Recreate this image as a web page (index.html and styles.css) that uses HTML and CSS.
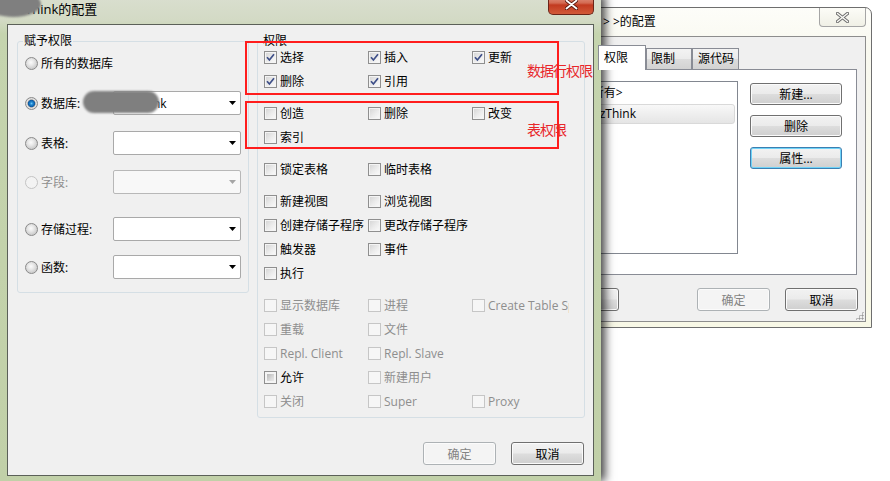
FILE: index.html
```html
<!doctype html>
<html lang="zh-CN">

<head>
    <meta charset="UTF-8">
    <title>权限配置</title>
    <link rel="stylesheet" href="styles.css">
</head>

<body>
    <div class="desktop">

        <!-- 后面的窗口 -->
        <div class="win back">
            <div class="back-title">
                <span class="back-text">&gt; &gt;的配置</span>
                <span class="back-close">
                    <svg width="13" height="11" viewBox="0 0 13 11"><path d="M1.5 1.5 L11.5 9.5 M11.5 1.5 L1.5 9.5" stroke="#6f6f6f" stroke-width="3.4" stroke-linecap="round"/><path d="M1.5 1.5 L11.5 9.5 M11.5 1.5 L1.5 9.5" stroke="#fbfbf6" stroke-width="1.4" stroke-linecap="round"/></svg>
                </span>
            </div>
            <div class="back-client">
                <div class="tabs">
                    <span class="tab active">权限</span>
                    <span class="tab t2">限制</span>
                    <span class="tab t3">源代码</span>
                </div>
                <div class="tab-panel">
                    <ul class="user-list">
                        <li>&lt;所有&gt;</li>
                        <li class="sel">dbzThink</li>
                    </ul>
                    <div class="side-btns">
                        <button class="btn wide">新建...</button>
                        <button class="btn wide">删除</button>
                        <button class="btn wide focus">属性...</button>
                    </div>
                </div>
                <div class="back-foot">
                    <button class="btn">应用</button>
                    <button class="btn push" disabled>确定</button>
                    <button class="btn">取消</button>
                </div>
                <span class="grip"></span>
            </div>
        </div>

        <!-- 前面的窗口 -->
        <div class="win front">
            <div class="front-title">
                <span class="front-text">Think的配置</span>
                <span class="front-close">
                    <svg width="13" height="11" viewBox="0 0 13 11"><path d="M1.5 1.5 L11.5 9.5 M11.5 1.5 L1.5 9.5" stroke="#5a1a10" stroke-width="3.6" stroke-linecap="round"/><path d="M1.5 1.5 L11.5 9.5 M11.5 1.5 L1.5 9.5" stroke="#fff" stroke-width="1.8" stroke-linecap="round"/></svg>
                </span>
            </div>
            <div class="front-client">
                <div class="groups">
                    <fieldset class="group group-grant">
                        <legend>赋予权限</legend>
                        <div class="opt opt-all">
                            <span class="radio"></span><span>所有的数据库</span>
                        </div>
                        <div class="opt">
                            <span class="opt-label"><span class="radio on"></span>数据库:</span>
                            <div class="combo"><span class="combo-text">onethink</span><span class="arrow"></span></div>
                        </div>
                        <div class="opt">
                            <span class="opt-label"><span class="radio"></span>表格:</span>
                            <div class="combo"><span class="combo-text"></span><span class="arrow"></span></div>
                        </div>
                        <div class="opt opt-field off">
                            <span class="opt-label"><span class="radio"></span>字段:</span>
                            <div class="combo"><span class="combo-text"></span><span class="arrow"></span></div>
                        </div>
                        <div class="opt opt-proc">
                            <span class="opt-label"><span class="radio"></span>存储过程:</span>
                            <div class="combo"><span class="combo-text"></span><span class="arrow"></span></div>
                        </div>
                        <div class="opt opt-func">
                            <span class="opt-label"><span class="radio"></span>函数:</span>
                            <div class="combo"><span class="combo-text"></span><span class="arrow"></span></div>
                        </div>
                    </fieldset>

                    <fieldset class="group group-priv">
                        <legend>权限</legend>
                        <!-- 数据行权限 -->
                        <div class="row">
                            <div class="chk"><span class="box"><svg class="tick" width="11" height="11" viewBox="0 0 11 11"><path d="M2 5.2 L4.4 8 L9 2.2"/></svg></span>选择</div>
                            <div class="chk"><span class="box"><svg class="tick" width="11" height="11" viewBox="0 0 11 11"><path d="M2 5.2 L4.4 8 L9 2.2"/></svg></span>插入</div>
                            <div class="chk"><span class="box"><svg class="tick" width="11" height="11" viewBox="0 0 11 11"><path d="M2 5.2 L4.4 8 L9 2.2"/></svg></span>更新</div>
                        </div>
                        <div class="row">
                            <div class="chk"><span class="box"><svg class="tick" width="11" height="11" viewBox="0 0 11 11"><path d="M2 5.2 L4.4 8 L9 2.2"/></svg></span>删除</div>
                            <div class="chk"><span class="box"><svg class="tick" width="11" height="11" viewBox="0 0 11 11"><path d="M2 5.2 L4.4 8 L9 2.2"/></svg></span>引用</div>
                        </div>
                        <!-- 表权限 -->
                        <div class="row sep">
                            <div class="chk"><span class="box"></span>创造</div>
                            <div class="chk"><span class="box"></span>删除</div>
                            <div class="chk"><span class="box"></span>改变</div>
                        </div>
                        <div class="row">
                            <div class="chk"><span class="box"></span>索引</div>
                        </div>
                        <div class="row sep">
                            <div class="chk"><span class="box"></span>锁定表格</div>
                            <div class="chk"><span class="box"></span>临时表格</div>
                        </div>
                        <div class="row sep">
                            <div class="chk"><span class="box"></span>新建视图</div>
                            <div class="chk"><span class="box"></span>浏览视图</div>
                        </div>
                        <div class="row">
                            <div class="chk"><span class="box"></span>创建存储子程序</div>
                            <div class="chk"><span class="box"></span>更改存储子程序</div>
                        </div>
                        <div class="row">
                            <div class="chk"><span class="box"></span>触发器</div>
                            <div class="chk"><span class="box"></span>事件</div>
                        </div>
                        <div class="row">
                            <div class="chk"><span class="box"></span>执行</div>
                        </div>
                        <!-- 服务器权限，不可用 -->
                        <div class="row sep">
                            <div class="chk off"><span class="box"></span>显示数据库</div>
                            <div class="chk off"><span class="box"></span>进程</div>
                            <div class="chk off"><span class="box"></span>Create Table Space</div>
                        </div>
                        <div class="row">
                            <div class="chk off"><span class="box"></span>重载</div>
                            <div class="chk off"><span class="box"></span>文件</div>
                        </div>
                        <div class="row">
                            <div class="chk off"><span class="box"></span>Repl. Client</div>
                            <div class="chk off"><span class="box"></span>Repl. Slave</div>
                        </div>
                        <div class="row">
                            <div class="chk"><span class="box mixed"></span>允许</div>
                            <div class="chk off"><span class="box"></span>新建用户</div>
                        </div>
                        <div class="row">
                            <div class="chk off"><span class="box"></span>关闭</div>
                            <div class="chk off"><span class="box"></span>Super</div>
                            <div class="chk off"><span class="box"></span>Proxy</div>
                        </div>
                    </fieldset>
                </div>
                <div class="foot">
                    <button class="btn" disabled>确定</button>
                    <button class="btn">取消</button>
                </div>
            </div>
        </div>

        <!-- 打码 -->
        <span class="blur blur-title"></span>
        <span class="blur blur-db"></span>

        <!-- 红框标注 -->
        <div class="mark mark-row"></div>
        <div class="mark mark-table"></div>
        <div class="note note-row">数据行权限</div>
        <div class="note note-table">表权限</div>
    </div>
</body>

</html>
```

FILE: styles.css
```css
* {
    margin: 0;
    padding: 0;
    box-sizing: border-box;
}
body {
    width: 890px;
    height: 481px;
    overflow: hidden;
    background: #fff;
    font-family: "Open Sans", "Noto Sans CJK SC", sans-serif;
    font-size: 12px;
    color: #000;
}
.desktop {
    position: relative;
    width: 890px;
    height: 481px;
    overflow: hidden;
}
.win {
    position: absolute;
}

/* 按钮 */
.btn {
    width: 73px;
    height: 23px;
    border: 1px solid #707070;
    border-radius: 3px;
    background: linear-gradient(#f2f2f2 0%, #ebebeb 48%, #dddddd 52%, #cfcfcf 100%);
    box-shadow: inset 0 0 0 1px #fbfbfb;
    font: 12px "Open Sans", "Noto Sans CJK SC", sans-serif;
    color: #000;
    flex: none;
}
.btn:disabled {
    border-color: #adb2b5;
    background: #f4f4f4;
    color: #838383;
}
.btn.wide {
    width: 92px;
    height: 22px;
}
.btn.focus {
    border-color: #3c7fb1;
    box-shadow: inset 0 0 0 1px #6fd3f8;
}

/*后面的窗口*/
.back {
    left: 520px;
    top: 7px;
    width: 352px;
    height: 321px;
    border: 1px solid #6e6e6e;
    border-radius: 7px 7px 0 0;
    background: linear-gradient(#fdfdf9, #f9f9f0 40px, #f8f8e6);
    padding: 0 5px 5px 6px;
    display: flex;
    flex-direction: column;
}
.back-title {
    height: 28px;
    display: flex;
    align-items: flex-start;
}
.back-text {
    padding-left: 76px;
    line-height: 28px;
}
.back-close {
    margin-left: auto;
    width: 47px;
    height: 19px;
    border: 1px solid #a5a5a5;
    border-top: 0;
    border-radius: 0 0 4px 4px;
    background: linear-gradient(#fcfcf7, #f0f0e6);
    display: flex;
    align-items: center;
    justify-content: center;
}
.back-client {
    position: relative;
    flex: 1;
    border: 1px solid #8d8d8d;
    background: #f0f0f0;
    display: flex;
    flex-direction: column;
}
.tabs {
    display: flex;
    align-items: flex-end;
    height: 32px;
    padding-left: 70px;
}
.tab {
    height: 21px;
    border: 1px solid #898c95;
    border-bottom: 0;
    background: linear-gradient(#f3f3f3, #ebebeb 50%, #dddddd 50%, #d2d2d2);
    padding-left: 4px;
    line-height: 20px;
}
.tab.active {
    position: relative;
    z-index: 1;
    width: 48px;
    height: 25px;
    margin-bottom: -1px;
    padding-left: 5px;
    line-height: 23px;
    background: #fff;
}
.tab.t2 {
    width: 46px;
}
.tab.t3 {
    width: 47px;
    padding-left: 5px;
}
.tab-panel {
    height: 206px;
    margin: 0 8px 0 7px;
    border: 1px solid #898c95;
    background: #fff;
    display: flex;
    padding: 11px 13px 0 24px;
}
.user-list {
    width: 178px;
    height: 173px;
    border: 1px solid #828790;
    list-style: none;
    padding: 1px 2px;
}
.user-list li {
    height: 20px;
    line-height: 20px;
    padding-left: 22px;
    margin-bottom: 1px;
}
.user-list .sel {
    border: 1px solid #d9d9d9;
    border-radius: 3px;
    background: linear-gradient(#f8f8f8, #e5e5e5);
    line-height: 18px;
    padding-left: 21px;
}
.side-btns {
    margin: 2px 0 0 12px;
    display: flex;
    flex-direction: column;
    gap: 10px;
}
.back-foot {
    display: flex;
    gap: 15px;
    margin-top: 13px;
    padding: 0 7px 0 18px;
}
.back-foot .push {
    margin-left: auto;
}
.grip {
    position: absolute;
    right: 1px;
    bottom: 1px;
    width: 9px;
    height: 9px;
    background: radial-gradient(circle, #9a9a9a 0.9px, transparent 1.2px) 0 0 / 3px 3px;
    clip-path: polygon(100% 0, 100% 100%, 0 100%);
}

/*前面的窗口*/
.front {
    left: 0;
    top: -6px;
    width: 601px;
    height: 488px;
    padding: 0 7px 6px;
    display: flex;
    flex-direction: column;
    background: linear-gradient(#dadfd0 0, #d3dac5 26px, #c5d4ae 40px, #c1d0a8 100%);
    box-shadow: 5px 0 9px -1px rgba(0, 0, 0, .75);
}
.front-title {
    height: 30px;
    display: flex;
    align-items: flex-start;
}
.front-text {
    padding-left: 18px;
    line-height: 30px;
    font-size: 13px;
}
.front-close {
    margin-left: auto;
    width: 46px;
    height: 21px;
    border: 1px solid #6b2418;
    border-top: 0;
    border-radius: 0 0 5px 5px;
    background: linear-gradient(#e8a596, #d36a52 45%, #c23a20 55%, #d25a39);
    display: flex;
    align-items: center;
    justify-content: center;
}
.front-client {
    flex: 1;
    border: 1px solid #5b6058;
    background: #f0f0f0;
    padding: 10px 8px 0 9px;
    display: flex;
    flex-direction: column;
}
.groups {
    display: flex;
    gap: 8px;
    align-items: flex-start;
}
.group {
    border: 1px solid #d5dfe5;
    border-radius: 3px;
}
.group legend {
    padding: 0 1px;
    margin-left: -2px;
    line-height: 12px;
}
.group-grant {
    width: 232px;
    padding: 4px 7px 13px;
}
.group-priv {
    width: 328px;
    padding: 0 6px 6px;
}

/*单选项*/
.opt {
    display: flex;
    align-items: center;
    height: 24px;
    margin-top: 16px;
}
.opt-all {
    margin-top: 0;
    gap: 3px;
}
.opt-field {
    margin-top: 15px;
}
.opt-proc {
    margin-top: 23px;
}
.opt-func {
    margin-top: 14px;
}
.opt-label {
    width: 88px;
    display: flex;
    align-items: center;
    gap: 3px;
}
.radio {
    width: 13px;
    height: 13px;
    flex: none;
    border-radius: 50%;
    border: 1px solid #8a8a8a;
    background: radial-gradient(circle at 45% 40%, #fbfbfb 0, #e8e8e8 3px, #cfcfcf 6px);
}
.radio.on {
    background: radial-gradient(circle, #6cc6f6 0, #2186cf 1.5px, #0d5aa2 3.3px, #9a9a9a 3.8px, #e6e6e6 4.5px, #d2d2d2 6px);
}
.off {
    color: #8e8e8e;
}
.off .radio {
    border-color: #c4c4c4;
    background: #f3f3f3;
}
.combo {
    width: 128px;
    height: 24px;
    border: 1px solid #a9a9a9;
    border-radius: 2px;
    background: #fff;
    display: flex;
    align-items: center;
}
.combo-text {
    flex: 1;
    padding-left: 3px;
}
.arrow {
    width: 7px;
    height: 4px;
    margin-right: 4px;
    background: #000;
    clip-path: polygon(0 0, 100% 0, 50% 100%);
}
.off .combo {
    border-color: #b8b8b8;
    background: #f8f8f8;
}
.off .arrow {
    background: #a6a6a6;
}

/*复选项*/
.row {
    display: grid;
    grid-template-columns: 104px 104px 97px;
    height: 20px;
    margin-top: 4px;
}
.group-priv legend + .row {
    margin-top: 0;
}
.row.sep {
    margin-top: 12px;
}
.chk {
    display: flex;
    align-items: center;
    gap: 3px;
    white-space: nowrap;
    overflow: hidden;
}
.box {
    width: 13px;
    height: 13px;
    flex: none;
    border: 1px solid #8f8f8f;
    background: linear-gradient(135deg, #d3d3d3 0, #ececec 55%, #fbfbfb);
    box-shadow: inset 0 0 0 1px #f4f4f4;
    display: flex;
    align-items: center;
    justify-content: center;
}
.box.mixed {
    background: linear-gradient(135deg, #a8a8a8 0, #dcdcdc 60%, #f3f3f3);
    box-shadow: inset 0 0 0 2px #f4f4f4;
}
.chk.off .box {
    border-color: #c6c6c6;
    background: #f6f6f6;
    box-shadow: none;
}
.tick path {
    fill: none;
    stroke: #3e4f88;
    stroke-width: 1.7;
}
.foot {
    display: flex;
    justify-content: flex-end;
    gap: 15px;
    margin-top: 24px;
    padding-right: 1px;
}

/*打码*/
.blur {
    position: absolute;
    background: #7f7f7f;
    filter: blur(1px);
}
.blur-title {
    left: -14px;
    top: -9px;
    width: 55px;
    height: 26px;
    border-radius: 50%;
}
.blur-db {
    left: 83px;
    top: 91px;
    width: 76px;
    height: 22px;
    border-radius: 11px;
}

/*红框标注*/
.mark {
    position: absolute;
    left: 245px;
    width: 314px;
    border: 2px solid #ff1d1d;
}
.mark-row {
    top: 41px;
    height: 54px;
}
.mark-table {
    top: 101px;
    height: 48px;
}
.note {
    position: absolute;
    left: 527px;
    font-family: "Noto Sans CJK SC", sans-serif;
    font-size: 14px;
    letter-spacing: -1px;
    line-height: 18px;
    color: #e8262a;
}
.note-row {
    top: 61px;
}
.note-table {
    top: 120px;
}
```
